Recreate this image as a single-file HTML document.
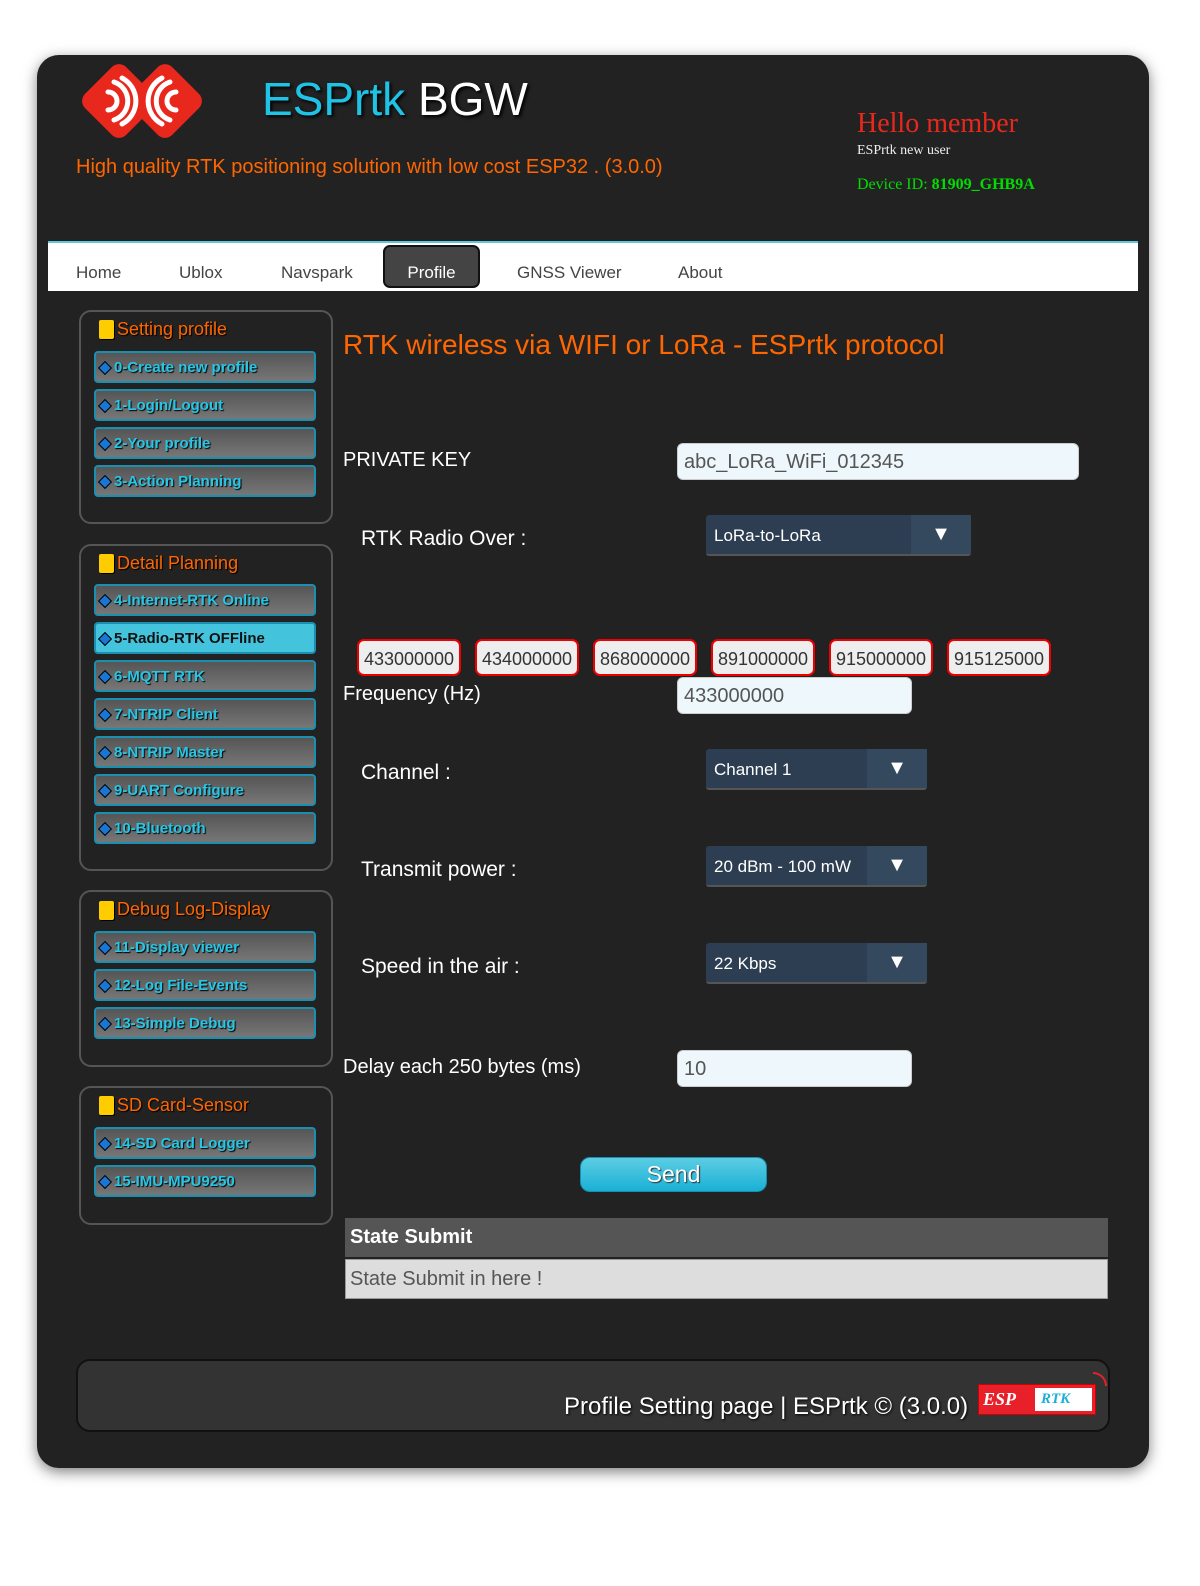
<!DOCTYPE html>
<html><head><meta charset="utf-8"><style>
*{margin:0;padding:0;box-sizing:border-box}
body{width:1200px;height:1586px;background:#fff;font-family:"Liberation Sans",sans-serif;position:relative;overflow:hidden}
.a{position:absolute}
#panel{left:37px;top:55px;width:1112px;height:1413px;background:#222;border-radius:22px;box-shadow:0 4px 14px rgba(0,0,0,.5)}
.nav{left:48px;top:241px;width:1090px;height:50px;background:#fff;border-top:2px solid #5bc8e0}
.nav span{position:absolute;top:20px;font-size:17px;color:#444}
.box{left:79px;width:254px;border:2px solid #555;border-radius:12px}
.bt{position:absolute;font-size:18px;color:#f60;left:117px;text-shadow:1px 1px 1px #000}
.ic{position:absolute;left:99px;width:15px;height:19px;background:#fc0;border-radius:2px;box-shadow:1px 1px 0 #000}
.btn{position:absolute;left:94px;width:222px;height:32px;border:2px solid #1b8fb0;border-radius:4px;background:linear-gradient(#555,#777);color:#26c6e6;font-weight:bold;font-size:15px;padding:6px 0 0 18px;text-shadow:1px 1px 1px #000}
.btn:before{content:"";position:absolute;left:4px;top:10px;width:8px;height:8px;background:#1976d2;border:1px solid #000;transform:rotate(45deg)}
.btn.on{background:#44c3dc;color:#111;text-shadow:none}
.lbl{position:absolute;color:#fff;font-size:20px}
.inp{position:absolute;background:#eef7fb;border:1px solid #ccc;border-radius:6px;font-size:20px;color:#555;padding:7px 6px}
.sel{position:absolute;left:706px;height:41px;background:#2e3e52;border-radius:3px;color:#fff;font-size:17px;padding:11px 8px;border-bottom:2px solid #555}
.sel i{position:absolute;right:0;top:0;width:60px;height:39px;background:#34495e;font-style:normal;text-align:center;font-size:20px;padding-top:8px}
.fq{position:absolute;top:639px;width:104px;height:37px;background:#eee;border:2px solid #e00;border-radius:7px;font-size:18px;color:#333;text-align:center;padding-top:8px}
</style></head><body>
<div id="panel" class="a"></div>
<svg class="a" style="left:78px;top:56px" width="128" height="90" viewBox="0 0 128 90">
<rect x="12" y="16" width="58" height="58" rx="10" fill="#e8281c" transform="rotate(45 41 45) translate(0 0)"/>
<rect x="58" y="16" width="58" height="58" rx="10" fill="#e8281c" transform="rotate(45 87 45)"/>
<g fill="none" stroke="#fff" stroke-width="5" stroke-linecap="round">
<path d="M30 36a9 9 0 0 1 0 18"/><path d="M36 26a20 20 0 0 1 0 38"/><path d="M44 22a26 26 0 0 1 0 46"/>
<path d="M98 36a9 9 0 0 0 0 18"/><path d="M92 26a20 20 0 0 0 0 38"/><path d="M84 22a26 26 0 0 0 0 46"/>
</g></svg>
<div class="a" style="left:262px;top:72px;font-size:46px;text-shadow:2px 2px 3px #000"><span style="color:#1ec3e6">ESPrtk</span> <span style="color:#fff">BGW</span></div>
<div class="a" style="left:76px;top:156px;font-size:20px;color:#f60">High quality RTK positioning solution with low cost ESP32 . (3.0.0)</div>
<div class="a" style="left:857px;top:108px;font-family:'Liberation Serif',serif;font-size:28px;color:#e8281c">Hello member</div>
<div class="a" style="left:857px;top:143px;font-family:'Liberation Serif',serif;font-size:14px;color:#eee">ESPrtk new user</div>
<div class="a" style="left:857px;top:176px;font-family:'Liberation Serif',serif;font-size:16px;color:#0d0">Device ID: <b>81909_GHB9A</b></div>
<div class="a nav"><span style="left:28px">Home</span><span style="left:131px">Ublox</span><span style="left:233px">Navspark</span>
<div class="a" style="left:335px;top:2px;width:97px;height:43px;background:#444;border:2px solid #111;border-radius:7px;color:#fff;font-size:17px;text-align:center;padding-top:16px">Profile</div>
<span style="left:469px">GNSS Viewer</span><span style="left:630px">About</span></div>

<div class="a box" style="top:310px;height:214px"></div>
<div class="ic" style="top:320px"></div><div class="bt" style="top:319px">Setting profile</div>
<div class="btn" style="top:351px">0-Create new profile</div>
<div class="btn" style="top:389px">1-Login/Logout</div>
<div class="btn" style="top:427px">2-Your profile</div>
<div class="btn" style="top:465px">3-Action Planning</div>

<div class="a box" style="top:544px;height:327px"></div>
<div class="ic" style="top:554px"></div><div class="bt" style="top:553px">Detail Planning</div>
<div class="btn" style="top:584px">4-Internet-RTK Online</div>
<div class="btn on" style="top:622px">5-Radio-RTK OFFline</div>
<div class="btn" style="top:660px">6-MQTT RTK</div>
<div class="btn" style="top:698px">7-NTRIP Client</div>
<div class="btn" style="top:736px">8-NTRIP Master</div>
<div class="btn" style="top:774px">9-UART Configure</div>
<div class="btn" style="top:812px">10-Bluetooth</div>

<div class="a box" style="top:890px;height:177px"></div>
<div class="ic" style="top:901px"></div><div class="bt" style="top:899px">Debug Log-Display</div>
<div class="btn" style="top:931px">11-Display viewer</div>
<div class="btn" style="top:969px">12-Log File-Events</div>
<div class="btn" style="top:1007px">13-Simple Debug</div>

<div class="a box" style="top:1086px;height:139px"></div>
<div class="ic" style="top:1096px"></div><div class="bt" style="top:1095px">SD Card-Sensor</div>
<div class="btn" style="top:1127px">14-SD Card Logger</div>
<div class="btn" style="top:1165px">15-IMU-MPU9250</div>

<div class="a" style="left:343px;top:329px;font-size:28px;color:#f60">RTK wireless via WIFI or LoRa - ESPrtk protocol</div>
<div class="lbl" style="left:343px;top:449px">PRIVATE KEY</div>
<div class="inp" style="left:677px;top:443px;width:402px;height:37px">abc_LoRa_WiFi_012345</div>
<div class="lbl" style="left:361px;top:527px;font-size:21px">RTK Radio Over :</div>
<div class="sel" style="width:265px;top:515px">LoRa-to-LoRa<i>▼</i></div>
<div class="fq" style="left:357px">433000000</div>
<div class="fq" style="left:475px">434000000</div>
<div class="fq" style="left:593px">868000000</div>
<div class="fq" style="left:711px">891000000</div>
<div class="fq" style="left:829px">915000000</div>
<div class="fq" style="left:947px">915125000</div>
<div class="lbl" style="left:343px;top:683px">Frequency (Hz)</div>
<div class="inp" style="left:677px;top:677px;width:235px;height:37px">433000000</div>
<div class="lbl" style="left:361px;top:761px;font-size:21px">Channel :</div>
<div class="sel" style="width:221px;top:749px">Channel 1<i>▼</i></div>
<div class="lbl" style="left:361px;top:858px;font-size:21px">Transmit power :</div>
<div class="sel" style="width:221px;top:846px">20 dBm - 100 mW<i>▼</i></div>
<div class="lbl" style="left:361px;top:955px;font-size:21px">Speed in the air :</div>
<div class="sel" style="width:221px;top:943px">22 Kbps<i>▼</i></div>
<div class="lbl" style="left:343px;top:1056px">Delay each 250 bytes (ms)</div>
<div class="inp" style="left:677px;top:1050px;width:235px;height:37px">10</div>
<div class="a" style="left:580px;top:1157px;width:187px;height:35px;background:linear-gradient(#5ccde3,#1ab0d6);border:1px solid #1790b0;border-radius:10px;color:#fff;font-size:23px;text-align:center;padding-top:3px;text-shadow:1px 1px 1px #333">Send</div>
<div class="a" style="left:345px;top:1218px;width:763px;height:39px;background:#555;color:#fff;font-weight:bold;font-size:20px;padding:8px 5px">State Submit</div>
<div class="a" style="left:345px;top:1259px;width:763px;height:40px;background:#ddd;border:1px solid #999;color:#555;font-size:20px;padding:8px 4px">State Submit in here !</div>
<div class="a" style="left:76px;top:1359px;width:1034px;height:73px;background:#333;border:2px solid #111;border-radius:14px"></div>
<div class="a" style="left:564px;top:1393px;font-size:24px;color:#fff;text-shadow:1px 1px 2px #000">Profile Setting page | ESPrtk © (3.0.0)</div>
<div class="a" style="left:978px;top:1384px;width:118px;height:31px;background:#e8202a;border:1px solid #c00"><span style="position:absolute;left:4px;top:4px;font:italic bold 18px 'Liberation Serif',serif;color:#fff">ESP</span><div style="position:absolute;left:56px;top:3px;width:57px;height:23px;background:#fff;font:italic bold 15px 'Liberation Serif',serif;color:#1ab0d6;padding:3px 0 0 6px">RTK</div></div>
<div class="a" style="left:1093px;top:1372px;width:14px;height:14px;border-top:2px solid #e8202a;border-right:2px solid #e8202a;border-radius:0 14px 0 0"></div>
</body></html>
